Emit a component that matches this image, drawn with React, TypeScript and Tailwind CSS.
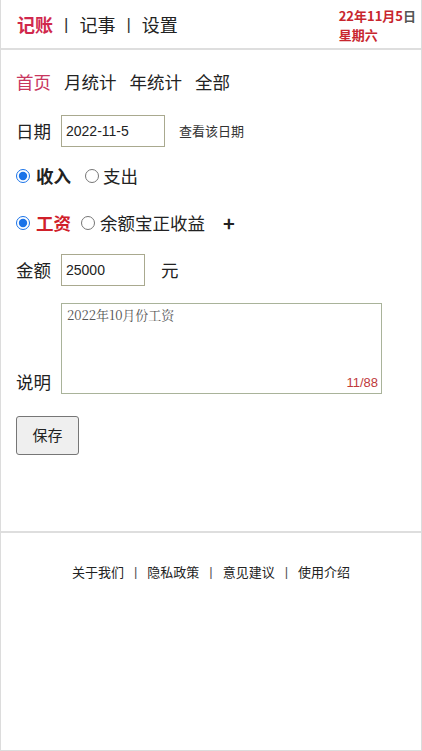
import { useState } from "react";

const font = { fontFamily: '"Noto Sans CJK SC", "Noto Sans", sans-serif' };
const latin = { fontFamily: '"Liberation Sans", Arial, sans-serif' };

export default function App() {
  const [type, setType] = useState("in");
  const [cat, setCat] = useState("salary");
  const [note, setNote] = useState("2022年10月份工资");

  return (
    <div
      className="w-[422px] h-[751px] border-x border-b border-[#dcdcdc] bg-white text-[#222] flex flex-col"
      style={font}
    >
      {/* 顶部导航 */}
      <header className="h-[50px] border-b-2 border-[#dedede] flex items-center justify-between pl-[16px] pr-[5px]">
        <div className="flex items-center text-[18px] leading-none gap-[11px]">
          <span className="text-[#d0284c] font-bold">记账</span>
          <span className="text-[#333] text-[17px]" style={latin}>|</span>
          <span>记事</span>
          <span className="text-[#333] text-[17px]" style={latin}>|</span>
          <span>设置</span>
        </div>
        <div className="flex flex-col items-start text-[13px] font-bold leading-[19px] text-[#c8262e] pt-[2px]">
          <span>
            22年11月5<span className="text-[#555]">日</span>
          </span>
          <span>星期六</span>
        </div>
      </header>

      <main className="pl-[15px] pt-[18px]">
        <nav className="flex gap-[13px] text-[17.5px] leading-[28px]">
          <span className="text-[#c8365e]">首页</span>
          <span>月统计</span>
          <span>年统计</span>
          <span>全部</span>
        </nav>

        <div className="flex items-center mt-[19px] text-[17.5px]">
          <span className="w-[45px]">日期</span>
          <input
            defaultValue="2022-11-5"
            className="w-[104px] h-[32px] border border-[#a9a98f] px-[4px] text-[14px] outline-none"
            style={latin}
          />
          <span className="ml-[14px] text-[13px] text-[#333]">查看该日期</span>
        </div>

        <div className="flex items-center mt-[14px] text-[17.5px] h-[30px]">
          <label className="flex items-center">
            <input
              type="radio"
              checked={type === "in"}
              onChange={() => setType("in")}
              className="w-[14px] h-[14px] m-0 accent-[#1a73e8]"
            />
            <span className="ml-[6px] font-bold">收入</span>
          </label>
          <label className="flex items-center ml-[14px]">
            <input
              type="radio"
              checked={type === "out"}
              onChange={() => setType("out")}
              className="w-[14px] h-[14px] m-0 accent-[#1a73e8]"
            />
            <span className="ml-[4px]">支出</span>
          </label>
        </div>

        <div className="flex items-center mt-[17px] text-[17.5px] h-[30px]">
          <label className="flex items-center">
            <input
              type="radio"
              checked={cat === "salary"}
              onChange={() => setCat("salary")}
              className="w-[14px] h-[14px] m-0 accent-[#1a73e8]"
            />
            <span className="ml-[6px] font-bold text-[#d0202a]">工资</span>
          </label>
          <label className="flex items-center ml-[10px]">
            <input
              type="radio"
              checked={cat === "yeb"}
              onChange={() => setCat("yeb")}
              className="w-[14px] h-[14px] m-0 accent-[#1a73e8]"
            />
            <span className="ml-[5px]">余额宝正收益</span>
          </label>
          <span className="ml-[18px] font-bold text-[20px]">+</span>
        </div>

        <div className="flex items-center mt-[16px] text-[17.5px]">
          <span className="w-[45px]">金额</span>
          <input
            defaultValue="25000"
            className="w-[84px] h-[32px] border border-[#a9a98f] px-[4px] text-[14px] outline-none"
            style={latin}
          />
          <span className="ml-[16px]">元</span>
        </div>

        <div className="flex items-end mt-[17px]">
          <span className="w-[45px] text-[17.5px] leading-[24px]">说明</span>
          <div className="relative">
            <textarea
              value={note}
              onChange={(e) => setNote(e.target.value)}
              maxLength={88}
              className="block w-[321px] h-[91px] border border-[#a9b39a] px-[5px] py-[1px] text-[13px] text-[#555] resize-none outline-none"
              style={{ fontFamily: '"Noto Serif CJK SC", "Liberation Serif", serif' }}
            />
            <span
              className="absolute right-[4px] bottom-[2px] text-[13px] text-[#c0393b]"
              style={latin}
            >
              {note.length}/88
            </span>
          </div>
        </div>

        <button className="mt-[22px] w-[63px] h-[39px] bg-[#efefef] border border-[#767676] rounded-[3px] text-[15px]">
          保存
        </button>
      </main>

      <div className="mt-[76px] border-t-2 border-[#dedede]" />

      <footer className="flex justify-center items-center gap-[10px] mt-[29px] text-[13px] text-[#222]">
        <span>关于我们</span>
        <span className="text-[#555]" style={latin}>|</span>
        <span>隐私政策</span>
        <span className="text-[#555]" style={latin}>|</span>
        <span>意见建议</span>
        <span className="text-[#555]" style={latin}>|</span>
        <span>使用介绍</span>
      </footer>
    </div>
  );
}
